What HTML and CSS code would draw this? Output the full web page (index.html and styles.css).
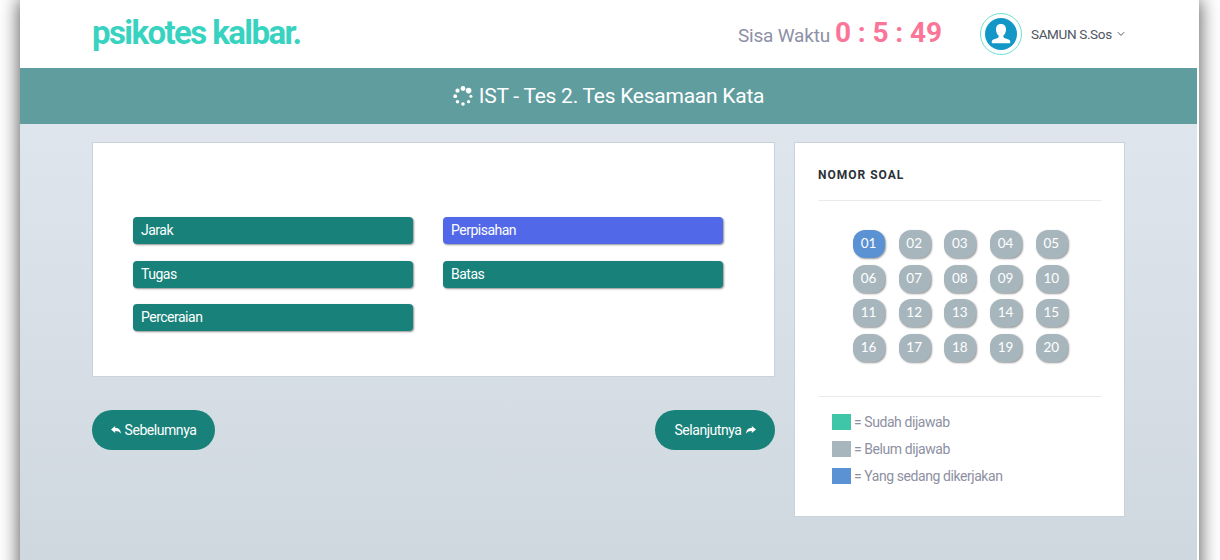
FILE: index.html
```html
<!DOCTYPE html>
<html lang="id">
<head>
<meta charset="utf-8">
<title>Psikotes Kalbar</title>
<link rel="stylesheet" href="styles.css">
</head>
<body>
<div class="page">
  <header class="header">
    <div class="logo">psikotes kalbar.</div>
    <div class="timer"><span class="timer-label">Sisa Waktu</span><span class="timer-value">0 : 5 : 49</span></div>
    <div class="user">
      <svg class="avatar" viewBox="0 0 42 42">
        <circle cx="21" cy="21" r="20.5" fill="#fff" stroke="#6be0d0"/>
        <circle cx="21" cy="21" r="16" fill="#1397c6"/>
        <path fill="#fff" d="M21 11c-3.300 0-5 2.100-5 5.400 0 2.300.9 4.600 2.300 5.900.7.900.5 2.200-.6 2.700l-4.300 1.600c-1.200.5-1.700 1.200-1.700 2.600 0 .7.400 1 1 1h16.600c.6 0 1-.3 1-1 0-1.400-.5-2.100-1.700-2.600L24.300 25c-1.100-.5-1.300-1.800-.6-2.700 1.400-1.300 2.300-3.600 2.300-5.900 0-3.300-1.700-5.400-5-5.400z"/>
      </svg>
      <span class="user-name">SAMUN S.Sos</span>
      <svg class="chevron" viewBox="0 0 8 6"><path d="M.8 1.200 4 4.400l3.200-3.200" fill="none" stroke="#555b66"/></svg>
    </div>
  </header>
  <div class="banner">
    <svg class="spinner" viewBox="0 0 20 20" fill="#fff">
      <circle cx="10" cy="2.500" r="2.400"/><circle cx="15.600" cy="4.600" r="2.800"/><circle cx="17.900" cy="10.200" r="1.500"/><circle cx="15.600" cy="15.700" r="1.600"/><circle cx="10" cy="18" r="1.800"/><circle cx="4.500" cy="15.700" r="1.800"/><circle cx="2.200" cy="10.200" r="1.900"/><circle cx="4.500" cy="4.700" r="2.100"/>
    </svg>
    <h1 class="banner-title">IST - Tes 2. Tes Kesamaan Kata</h1>
  </div>
  <main class="content">
    <section class="main-column">
      <div class="card question">
        <div class="option">Jarak</div>
        <div class="option option-selected">Perpisahan</div>
        <div class="option">Tugas</div>
        <div class="option">Batas</div>
        <div class="option">Perceraian</div>
      </div>
      <nav class="nav">
        <a class="button button-prev"><svg class="arrow" viewBox="0 0 10 8"><path fill="#fff" d="M0 3.500 4.200 0v2C8 2 9.700 4 9.900 7.800 8.700 5.700 7 5 4.200 5v2z"/></svg><span>Sebelumnya</span></a>
        <a class="button button-next"><span>Selanjutnya</span><svg class="arrow" viewBox="0 0 10 8"><path fill="#fff" d="M10 3.500 5.800 0v2C2 2 .3 4 .1 7.800 1.300 5.700 3 5 5.800 5v2z"/></svg></a>
      </nav>
    </section>
    <aside class="card sidebar">
      <h2 class="sidebar-title">NOMOR SOAL</h2>
      <div class="numbers">
        <span class="number number-current">01</span><span class="number">02</span><span class="number">03</span><span class="number">04</span><span class="number">05</span>
        <span class="number">06</span><span class="number">07</span><span class="number">08</span><span class="number">09</span><span class="number">10</span>
        <span class="number">11</span><span class="number">12</span><span class="number">13</span><span class="number">14</span><span class="number">15</span>
        <span class="number">16</span><span class="number">17</span><span class="number">18</span><span class="number">19</span><span class="number">20</span>
      </div>
      <div class="legend">
        <div class="legend-row"><span class="swatch swatch-done"></span>= Sudah dijawab</div>
        <div class="legend-row"><span class="swatch"></span>= Belum dijawab</div>
        <div class="legend-row"><span class="swatch swatch-current"></span>= Yang sedang dikerjakan</div>
      </div>
    </aside>
  </main>
</div>
</body>
</html>
```
FILE: styles.css
```css
* { box-sizing: border-box; }
body { margin: 0; height: 560px; overflow: hidden; background: #fff; font-family: Roboto, sans-serif; }
.page { width: 1179px; height: 580px; margin-left: 20px; border-right: 2px solid #fff; background: linear-gradient(#e0e7ee 68px, #d0d8df 560px); box-shadow: 0 0 18px 1px #000000a8; }
.header { display: flex; align-items: center; height: 68px; padding: 0 71px 0 72px; background: #fff; white-space: nowrap; }
.logo { width: 646px; margin-top: -4px; font-size: 33px; font-weight: 700; letter-spacing: -1.6px; color: #38d3c0; }
.timer { display: flex; align-items: baseline; gap: 5px; width: 242px; margin-top: -3px; }
.timer-label { font-size: 19px; letter-spacing: -0.200px; color: #8d90a6; }
.timer-value { font-size: 28px; font-weight: 700; letter-spacing: -0.100px; color: #fa7598; }
.user { display: flex; align-items: center; }
.avatar { width: 42px; height: 42px; margin-right: 9px; }
.user-name { width: 82px; margin-top: -1px; font-size: 13.500px; font-weight: 400; letter-spacing: -0.350px; color: #50555f; }
.chevron { width: 8px; height: 6px; margin-left: 4px; }
.banner { display: flex; align-items: center; justify-content: center; gap: 6px; height: 55.500px; background: #5f9d9f; color: #fff; }
.spinner { width: 20px; height: 20px; }
.banner-title { margin: 0; font-size: 21px; font-weight: 400; letter-spacing: -0.250px; white-space: nowrap; }
.content { display: flex; align-items: flex-start; gap: 19px; padding: 18.500px 72px; }
.card { border: 1px solid #c8d3da; background: #fff; }
.main-column { width: 683px; }
.question { display: grid; grid-template-columns: 280px 280px; grid-auto-rows: 27px; gap: 16.600px 30px; height: 235px; padding: 74px 0 0 40px; }
.option { padding-left: 8px; border-radius: 4px; background: #17817a; box-shadow: 1px 1px 2px #00000070; color: #fff; font-size: 14px; letter-spacing: -0.500px; line-height: 26px; }
.option-selected { background: #5168e8; }
.nav { display: flex; justify-content: space-between; padding-top: 33px; }
.button { display: flex; align-items: center; justify-content: center; gap: 4px; height: 40px; border-radius: 20px; background: #17817a; color: #fff; font-size: 14px; letter-spacing: -0.450px; }
.button-prev { width: 123px; }
.button-next { width: 120px; }
.arrow { width: 10px; height: 8px; }
.sidebar { width: 331px; height: 375px; padding: 25px 23px 0 23px; }
.sidebar-title { height: 33px; margin: 0; border-bottom: 1px solid #e8eaec; font-size: 12px; font-weight: 700; line-height: 14px; letter-spacing: 1px; color: #2c3138; }
.numbers { display: grid; grid-template-columns: repeat(5, 32px); grid-auto-rows: 28px; gap: 6.600px 13.700px; height: 196px; padding: 29px 0 0 35px; border-bottom: 1px solid #e8eaec; font-family: Lato, sans-serif; font-size: 13.500px; line-height: 27px; color: #fff; }
.number { border-radius: 12px; background: #a7b6bd; box-shadow: 1px 1px 2px #00000068; text-align: center; padding-right: 1px; }
.number-current { background: #5b92d3; }
.legend { padding: 11px 0 0 14px; font-size: 14px; letter-spacing: -0.430px; color: #8d90a2; }
.legend-row { display: flex; align-items: center; gap: 3px; height: 27px; }
.swatch { width: 19px; height: 16px; background: #a7b6bd; }
.swatch-done { background: #3fc6a9; }
.swatch-current { background: #5b92d3; }
```
